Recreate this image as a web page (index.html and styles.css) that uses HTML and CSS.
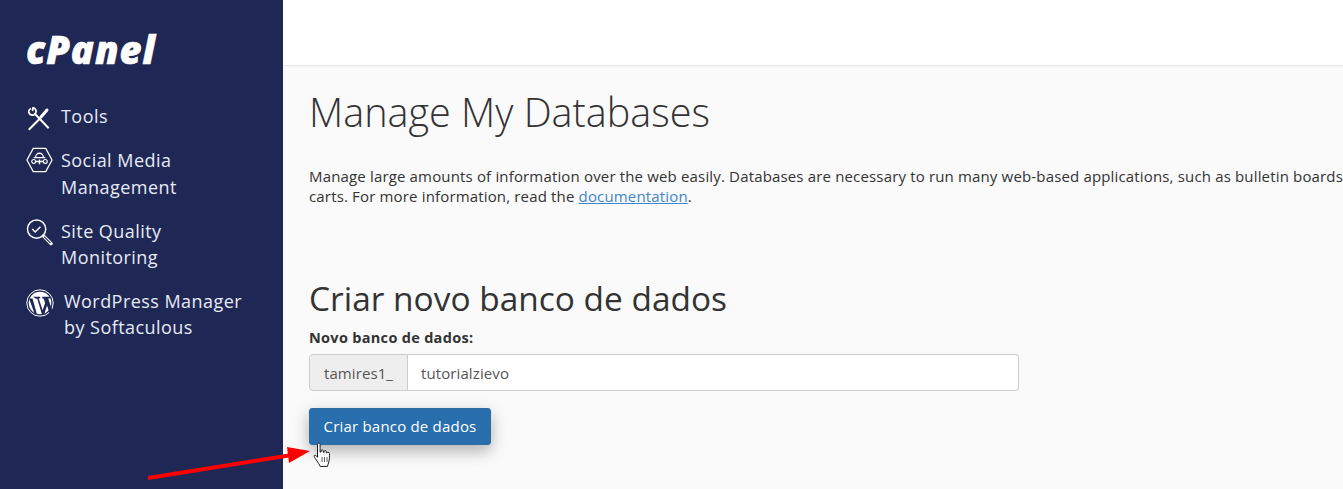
FILE: index.html
```html
<!DOCTYPE html>
<html lang="en">
<head>
<meta charset="utf-8">
<title>Manage My Databases</title>
<link rel="stylesheet" href="styles.css">
</head>
<body>
<div class="app">
  <aside class="sidebar">
    <div class="logo">cPanel</div>
    <nav class="nav">
      <a class="nav-item nav-tools">
        <svg class="nav-icon" width="26" height="26" viewBox="0 0 26 26" fill="none" stroke="#fff" stroke-width="2">
          <path d="M9.500 9.500L22 22.500M3.500 24L14 13.500" stroke-linecap="square"/>
          <path d="M5 3.500a3.500 3.500 0 0 0-2 4.500c1 2 3.500 2.600 5 1.700l1.700-1.700c.9-1.500.3-4-1.700-5-.4-.2-.6-.2-1-.2L6.500 6" stroke-width="1.800"/>
          <path d="M15 12l6-7" stroke-width="3" stroke-linecap="round"/>
        </svg>
        <span>Tools</span>
      </a>
      <a class="nav-item nav-social">
        <svg class="nav-icon" width="27" height="26" viewBox="0 0 28 26" fill="none" stroke="#fff">
          <path d="M7.500 1h13L27 13l-6.500 12h-13L1 13z" stroke-width="1.300"/>
          <path d="M10 10a4 4 0 0 1 8 0M8 10.500h12" stroke-width="1.300"/>
          <circle cx="8" cy="14.500" r="2" stroke-width="1.200"/>
          <circle cx="20" cy="14.500" r="2" stroke-width="1.200"/>
          <path d="M10 14.500h8M14 12.500v5" stroke-width="1.500"/>
        </svg>
        <span>Social Media<br>Management</span>
      </a>
      <a class="nav-item nav-site">
        <svg class="nav-icon" width="27" height="28" viewBox="0 0 28 28" fill="none" stroke="#fff">
          <circle cx="11" cy="11" r="9.500" stroke-width="1.500"/>
          <path d="M6.500 11l3 3 5.500-5.500" stroke-width="1.500"/>
          <path d="M18 18l8 8" stroke-width="3.400" stroke-linecap="round"/>
          <path d="M19 19l6 6" stroke="#1f2754" stroke-width="1.200" stroke-linecap="round"/>
        </svg>
        <span>Site Quality<br>Monitoring</span>
      </a>
      <a class="nav-item nav-wp">
        <svg class="nav-icon" width="28" height="28" viewBox="0 0 28 28">
          <circle cx="14" cy="14" r="13.200" fill="none" stroke="#fff" stroke-width="1"/>
          <circle cx="14" cy="14" r="11.300" fill="#fff"/>
          <path d="M3 9.500l5.500 15 2.500 1-4.500-16zM7 7.800h7.200v1.500l-1.500.2 4 11.800 2.400-7.400-1.500-4.400-1.400-.1V7.800h7.800v1.500l-1.800.2 4 12-2.500 3-2.700-8-2.800 8.800-2.200.3-4.700-15.900-1.800-.2z" fill="#1f2754"/>
        </svg>
        <span>WordPress Manager<br>by Softaculous</span>
      </a>
    </nav>
  </aside>
  <div class="content">
    <header class="topbar"></header>
    <main class="main">
      <h1 class="title">Manage My Databases</h1>
      <p class="intro">Manage large amounts of information over the web easily. Databases are necessary to run many web-based applications, such as bulletin boards<br>carts. For more information, read the <a class="link">documentation</a>.</p>
      <h2 class="subtitle">Criar novo banco de dados</h2>
      <label class="field-label">Novo banco de dados:</label>
      <div class="input-group">
        <span class="addon">tamires1_</span>
        <span class="input">tutorialzievo</span>
      </div>
      <button class="btn">Criar banco de dados</button>
    </main>
  </div>
  <svg class="arrow" width="170" height="40" viewBox="0 0 170 40">
    <path d="M6 34L150 11" stroke="#f00" stroke-width="4" fill="none"/>
    <path d="M168 7L145 3l2 16z" fill="#f00"/>
  </svg>
  <svg class="hand" width="20" height="26" viewBox="0 0 20 26">
    <path d="M4.500 2.300c0-1.700 2.600-1.700 2.600 0V10l1 .1V8.800c0-1.300 2-1.300 2.200 0v1.500l.8.100V9.600c0-1.300 2.100-1.300 2.200 0v1.300l.8.100c.2-1.100 2.200-1 2.300.3.100 3 .2 6-.6 8.500-.5 2-1.100 3.300-1.300 4.600H7.200c-.8-2-1.900-3.300-3.800-6.300C2.200 16.200.7 14.700 1.300 13.600c.7-1 2.200.2 3.200 1.700z" fill="#fff" stroke="#1a1a1a" stroke-width="1"/>
    <path d="M9.100 15v5M11.500 15v5M14 15v5" stroke="#1a1a1a" stroke-width=".7" fill="none"/>
  </svg>
</div>
</body>
</html>
```
FILE: styles.css
```css
* { box-sizing: border-box; }
html, body { margin: 0; height: 100%; overflow: hidden; }
body { font-family: "Open Sans", "Liberation Sans", sans-serif; color: #333; background: #fafafa; }
.app { position: relative; display: flex; height: 489px; width: 1343px; overflow: hidden; }
.sidebar { width: 283px; flex: none; background: #1f2754; color: #e6ebf5; padding: 27px 0 0 26px; }
.logo { font-family: "Open Sans", sans-serif; font-style: italic; font-weight: 800; font-size: 38px; line-height: 44px; height: 44px; letter-spacing: 1px; color: #fff; -webkit-text-stroke: .6px #fff; }
.nav { display: flex; flex-direction: column; margin-top: 32px; }
.nav-item { display: flex; align-items: flex-start; font-size: 18px; letter-spacing: .45px; line-height: 26px; color: #e6ebf5; }
.nav-icon { flex: none; display: block; }
.nav-tools { gap: 9px; height: 44px; }
.nav-tools .nav-icon { margin-top: 2px; }
.nav-social { gap: 8px; height: 71px; line-height: 27px; }
.nav-site { gap: 8px; height: 70px; }
.nav-wp { gap: 10px; }
.nav-wp .nav-icon { margin-top: 1px; }
.content { flex: 1; min-width: 0; display: flex; flex-direction: column; }
.topbar { height: 66px; flex: none; background: #fff; border-bottom: 1px solid #e8e8e8; box-shadow: 0 1px 2px rgba(0,0,0,.03); }
.main { padding: 0 0 0 26px; white-space: nowrap; }
.title { margin: 19px 0 0; font-weight: 300; font-size: 39.600px; line-height: 54px; color: #333; }
.intro { margin: 27px 0 0; font-size: 15px; letter-spacing: .16px; line-height: 20px; color: #333; }
.link { color: #3f86c9; text-decoration: underline; }
.subtitle { margin: 70px 0 0; font-weight: 500; font-size: 33.450px; line-height: 44px; color: #333; }
.field-label { display: block; margin-top: 8px; font-size: 14.500px; letter-spacing: .3px; font-weight: 700; line-height: 20px; color: #333; }
.input-group { display: flex; width: 710px; height: 37px; margin-top: 6px; font-size: 15px; letter-spacing: .1px; color: #555; }
.addon { width: 99px; display: flex; align-items: center; justify-content: center; background: #eee; border: 1px solid #ccc; border-radius: 4px 0 0 4px; }
.input { flex: 1; display: flex; align-items: center; padding-left: 13px; background: #fff; border: 1px solid #ccc; border-left: 0; border-radius: 0 4px 4px 0; }
.btn { display: block; width: 182px; height: 37px; margin-top: 17px; padding: 0 0 2px; font-family: inherit; font-size: 15px; letter-spacing: .2px; color: #fff; background: #2a6fad; border: 1px solid #2e6da4; border-radius: 3px; box-shadow: 0 6px 16px rgba(0,0,0,.3); }
.arrow { position: absolute; left: 142px; top: 444px; }
.hand { position: absolute; left: 313px; top: 442px; }
```
